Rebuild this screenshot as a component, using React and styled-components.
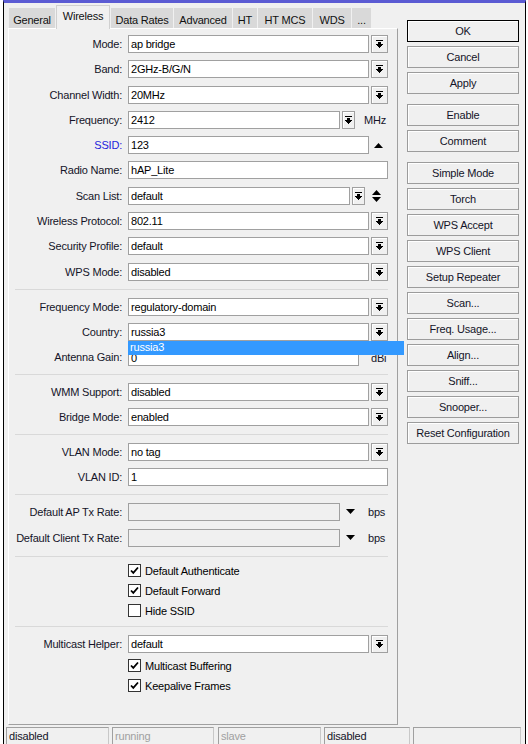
import React from "react";
import styled, { createGlobalStyle } from "styled-components";

const GlobalStyle = createGlobalStyle`
  html, body {
    margin: 0;
    padding: 0;
    background: #fff;
  }
  body {
    font-family: "Liberation Sans", Arial, sans-serif;
    font-size: 11px;
    letter-spacing: -0.2px;
    color: #000;
  }
`;

const Screen = styled.div`
  width: 528px;
  height: 744px;
  overflow: hidden;
  box-sizing: border-box;
  padding-left: 3px;
  background: #fff;
`;

const Window = styled.div`
  width: 523px;
  height: 744px;
  box-sizing: border-box;
  border-left: 1px solid #000;
  border-right: 1px solid #000;
  border-top: 3px solid #5b5bd3;
  background: #f0f0f0;
  display: flex;
  flex-direction: column;
`;

const Main = styled.div`
  flex: 1;
  display: flex;
  padding: 0 0 2px 4px;
  min-height: 0;
`;

const LeftCol = styled.div`
  width: 390px;
  display: flex;
  flex-direction: column;
`;

const TabBar = styled.div`
  height: 26px;
  display: flex;
  align-items: flex-end;
  gap: 1px;
  padding-left: 1px;
  margin-bottom: -1px;
  position: relative;
  z-index: 2;
`;

const Tab = styled.div`
  width: ${(p) => p.w}px;
  box-sizing: border-box;
  height: ${(p) => (p.active ? 24 : 20)}px;
  margin-bottom: ${(p) => (p.active ? 0 : 1)}px;
  padding-top: ${(p) => (p.active ? 4 : 5)}px;
  text-align: center;
  white-space: nowrap;
  background: ${(p) => (p.active ? "#f0f0f0" : "#d9d9d9")};
  border: 1px solid ${(p) => (p.active ? "#d0d0d0" : "#d9d9d9")};
  border-bottom: none;
  color: #111;
`;

const Panel = styled.div`
  flex: 1;
  box-sizing: border-box;
  border-top: 1px solid #fff;
  border-left: 1px solid #fff;
  border-right: 1px solid #a0a0a0;
  border-bottom: 1px solid #a0a0a0;
  padding: 6px 9px 0 6px;
  display: flex;
  flex-direction: column;
`;

const Section = styled.div`
  display: flex;
  flex-direction: column;
  gap: ${(p) => p.gap ?? 7}px;
  padding: ${(p) => p.pt ?? 8}px 0 ${(p) => p.pb ?? 8}px;
  border-top: ${(p) => (p.first ? "none" : "1px solid #d9d9d9")};
`;

const Row = styled.div`
  display: grid;
  grid-template-columns: 107px 1fr;
  column-gap: 6px;
  height: ${(p) => p.h ?? 18}px;
  align-items: center;
`;

const Label = styled.div`
  text-align: right;
  white-space: nowrap;
  color: ${(p) => p.color || "#141428"};
`;

const Controls = styled.div`
  display: flex;
  align-items: center;
  height: 100%;
  position: relative;
`;

const Box = styled.div`
  flex: 1;
  height: 18px;
  box-sizing: border-box;
  border: 1px solid #a0a0a0;
  background: ${(p) => (p.disabled ? "#f0f0f0" : "#fff")};
  padding: ${(p) => (p.low ? "3px 2px 0" : "0 2px")};
  line-height: ${(p) => (p.low ? 13 : 16)}px;
  white-space: nowrap;
  overflow: hidden;
`;

const DropBtn = styled.div`
  width: ${(p) => p.w ?? 17}px;
  height: 18px;
  margin-left: 2px;
  box-sizing: border-box;
  border: 1px solid #a0a0a0;
  box-shadow: inset 1px 1px 0 #fff;
  background: #f0f0f0;
  display: flex;
  align-items: center;
  justify-content: center;
`;

const Glyph = styled.div`
  width: ${(p) => p.w}px;
  flex: none;
  display: flex;
  align-items: center;
  justify-content: center;
`;

const Unit = styled.div`
  width: ${(p) => p.w}px;
  flex: none;
  padding-left: ${(p) => p.pl}px;
  padding-top: ${(p) => p.pt ?? 0}px;
  box-sizing: border-box;
  white-space: nowrap;
  color: #141428;
`;

const Popup = styled.div`
  position: absolute;
  left: 0;
  top: 18px;
  width: 276px;
  height: 14px;
  box-sizing: border-box;
  background: #3399ff;
  color: #fff;
  padding-left: 2px;
  line-height: 13px;
  z-index: 5;
`;

const CheckWrap = styled.div`
  display: flex;
  align-items: center;
  gap: 4px;
`;

const CheckBox = styled.div`
  width: 13px;
  height: 13px;
  box-sizing: border-box;
  border: 1px solid #333;
  background: #fff;
  display: flex;
  align-items: center;
  justify-content: center;
`;

const RightCol = styled.div`
  width: 112px;
  margin-left: 9px;
  padding-top: 17px;
  display: flex;
  flex-direction: column;
`;

const Btn = styled.div`
  height: 22px;
  box-sizing: border-box;
  margin-bottom: ${(p) => (p.groupEnd ? 10 : 4)}px;
  border: 1px solid ${(p) => (p.primary ? "#000" : "#9c9c9c")};
  box-shadow: inset 1px 1px 0 #fff;
  background: #f0f0f0;
  text-align: center;
  line-height: 20px;
  color: #141428;
  white-space: nowrap;
`;

const StatusBar = styled.div`
  height: 17px;
  display: flex;
  padding-left: 2px;
  overflow: hidden;
`;

const Cell = styled.div`
  width: ${(p) => p.w}px;
  margin-right: ${(p) => p.mr}px;
  height: 20px;
  box-sizing: border-box;
  border-top: 1px solid #a0a0a0;
  border-left: 1px solid #a0a0a0;
  border-right: 1px solid #c8c8c8;
  padding: 2px 0 0 2px;
  color: ${(p) => (p.dim ? "#a0a0a0" : "#141428")};
  white-space: nowrap;
`;

const DropIcon = () => (
  <svg width="7" height="8" viewBox="0 0 7 8" shapeRendering="crispEdges">
    <rect x="0" y="0" width="7" height="1" fill="#000" />
    <path d="M2 2h3v2h2l-3.5 4L0 4h2z" fill="#000" />
  </svg>
);

const TriDown = () => (
  <svg width="9" height="5" viewBox="0 0 9 5">
    <path d="M0 0h9L4.5 5z" fill="#000" />
  </svg>
);

const TriUp = () => (
  <svg width="9" height="5" viewBox="0 0 9 5">
    <path d="M0 5h9L4.5 0z" fill="#000" />
  </svg>
);

const UpDown = () => (
  <svg width="9" height="12" viewBox="0 0 9 12">
    <path d="M0 5h9L4.5 0z" fill="#000" />
    <path d="M0 7h9L4.5 12z" fill="#000" />
  </svg>
);

const Tick = () => (
  <svg width="9" height="9" viewBox="0 0 9 9">
    <path d="M1 4.5l2.3 2.4L8 1.5" stroke="#000" strokeWidth="1.8" fill="none" />
  </svg>
);

const tabs = [
  ["General", 46],
  ["Wireless", 54, true],
  ["Data Rates", 62],
  ["Advanced", 58],
  ["HT", 24],
  ["HT MCS", 54],
  ["WDS", 38],
  ["...", 19],
];

const buttons = [
  ["OK", false, true],
  ["Cancel"],
  ["Apply", true],
  ["Enable"],
  ["Comment", true],
  ["Simple Mode"],
  ["Torch"],
  ["WPS Accept"],
  ["WPS Client"],
  ["Setup Repeater"],
  ["Scan..."],
  ["Freq. Usage..."],
  ["Align..."],
  ["Sniff..."],
  ["Snooper..."],
  ["Reset Configuration"],
];

const Combo = ({ label, value, color }) => (
  <Row>
    <Label color={color}>{label}:</Label>
    <Controls>
      <Box>{value}</Box>
      <DropBtn>
        <DropIcon />
      </DropBtn>
    </Controls>
  </Row>
);

const Check = ({ label, checked }) => (
  <Row h={20}>
    <div />
    <CheckWrap>
      <CheckBox>{checked && <Tick />}</CheckBox>
      <span>{label}</span>
    </CheckWrap>
  </Row>
);

const RateRow = ({ label }) => (
  <Row>
    <Label>{label}:</Label>
    <Controls>
      <Box disabled />
      <Glyph w={21}>
        <TriDown />
      </Glyph>
      <Unit w={27} pl={7}>bps</Unit>
    </Controls>
  </Row>
);

export default function App() {
  return (
    <>
      <GlobalStyle />
      <Screen>
        <Window>
          <Main>
            <LeftCol>
              <TabBar>
                {tabs.map(([name, w, active]) => (
                  <Tab key={name} w={w} active={active}>
                    {name}
                  </Tab>
                ))}
              </TabBar>
              <Panel>
                <Section first pt={0} gap={7.3}>
                  <Combo label="Mode" value="ap bridge" />
                  <Combo label="Band" value="2GHz-B/G/N" />
                  <Combo label="Channel Width" value="20MHz" />
                  <Row>
                    <Label>Frequency:</Label>
                    <Controls>
                      <Box>2412</Box>
                      <DropBtn w={13}>
                        <DropIcon />
                      </DropBtn>
                      <Unit w={33} pl={9}>MHz</Unit>
                    </Controls>
                  </Row>
                  <Row>
                    <Label color="#2424dc">SSID:</Label>
                    <Controls>
                      <Box>123</Box>
                      <Glyph w={19}>
                        <TriUp />
                      </Glyph>
                    </Controls>
                  </Row>
                  <Row>
                    <Label>Radio Name:</Label>
                    <Controls>
                      <Box>hAP_Lite</Box>
                    </Controls>
                  </Row>
                  <Row>
                    <Label>Scan List:</Label>
                    <Controls>
                      <Box>default</Box>
                      <DropBtn w={13}>
                        <DropIcon />
                      </DropBtn>
                      <Glyph w={23}>
                        <UpDown />
                      </Glyph>
                    </Controls>
                  </Row>
                  <Combo label="Wireless Protocol" value="802.11" />
                  <Combo label="Security Profile" value="default" />
                  <Combo label="WPS Mode" value="disabled" />
                </Section>

                <Section>
                  <Combo label="Frequency Mode" value="regulatory-domain" />
                  <Row>
                    <Label>Country:</Label>
                    <Controls>
                      <Box>russia3</Box>
                      <DropBtn>
                        <DropIcon />
                      </DropBtn>
                      <Popup>russia3</Popup>
                    </Controls>
                  </Row>
                  <Row>
                    <Label>Antenna Gain:</Label>
                    <Controls>
                      <Box low>0</Box>
                      <Unit w={29} pl={12} pt={3}>dBi</Unit>
                    </Controls>
                  </Row>
                </Section>

                <Section>
                  <Combo label="WMM Support" value="disabled" />
                  <Combo label="Bridge Mode" value="enabled" />
                </Section>

                <Section>
                  <Combo label="VLAN Mode" value="no tag" />
                  <Row>
                    <Label>VLAN ID:</Label>
                    <Controls>
                      <Box>1</Box>
                    </Controls>
                  </Row>
                </Section>

                <Section gap={8} pb={9}>
                  <RateRow label="Default AP Tx Rate" />
                  <RateRow label="Default Client Tx Rate" />
                </Section>

                <Section gap={0} pt={4} pb={5}>
                  <Check label="Default Authenticate" checked />
                  <Check label="Default Forward" checked />
                  <Check label="Hide SSID" />
                </Section>

                <Section gap={0}>
                  <Combo label="Multicast Helper" value="default" />
                  <div style={{ height: 3 }} />
                  <Check label="Multicast Buffering" checked />
                  <Check label="Keepalive Frames" checked />
                </Section>
              </Panel>
            </LeftCol>

            <RightCol>
              {buttons.map(([name, groupEnd, primary]) => (
                <Btn key={name} groupEnd={groupEnd} primary={primary}>
                  {name}
                </Btn>
              ))}
            </RightCol>
          </Main>

          <StatusBar>
            <Cell w={103} mr={3}>disabled</Cell>
            <Cell w={102} mr={4} dim>running</Cell>
            <Cell w={103} mr={3} dim>slave</Cell>
            <Cell w={86} mr={3}>disabled</Cell>
            <Cell w={108} mr={0} />
          </StatusBar>
        </Window>
      </Screen>
    </>
  );
}
